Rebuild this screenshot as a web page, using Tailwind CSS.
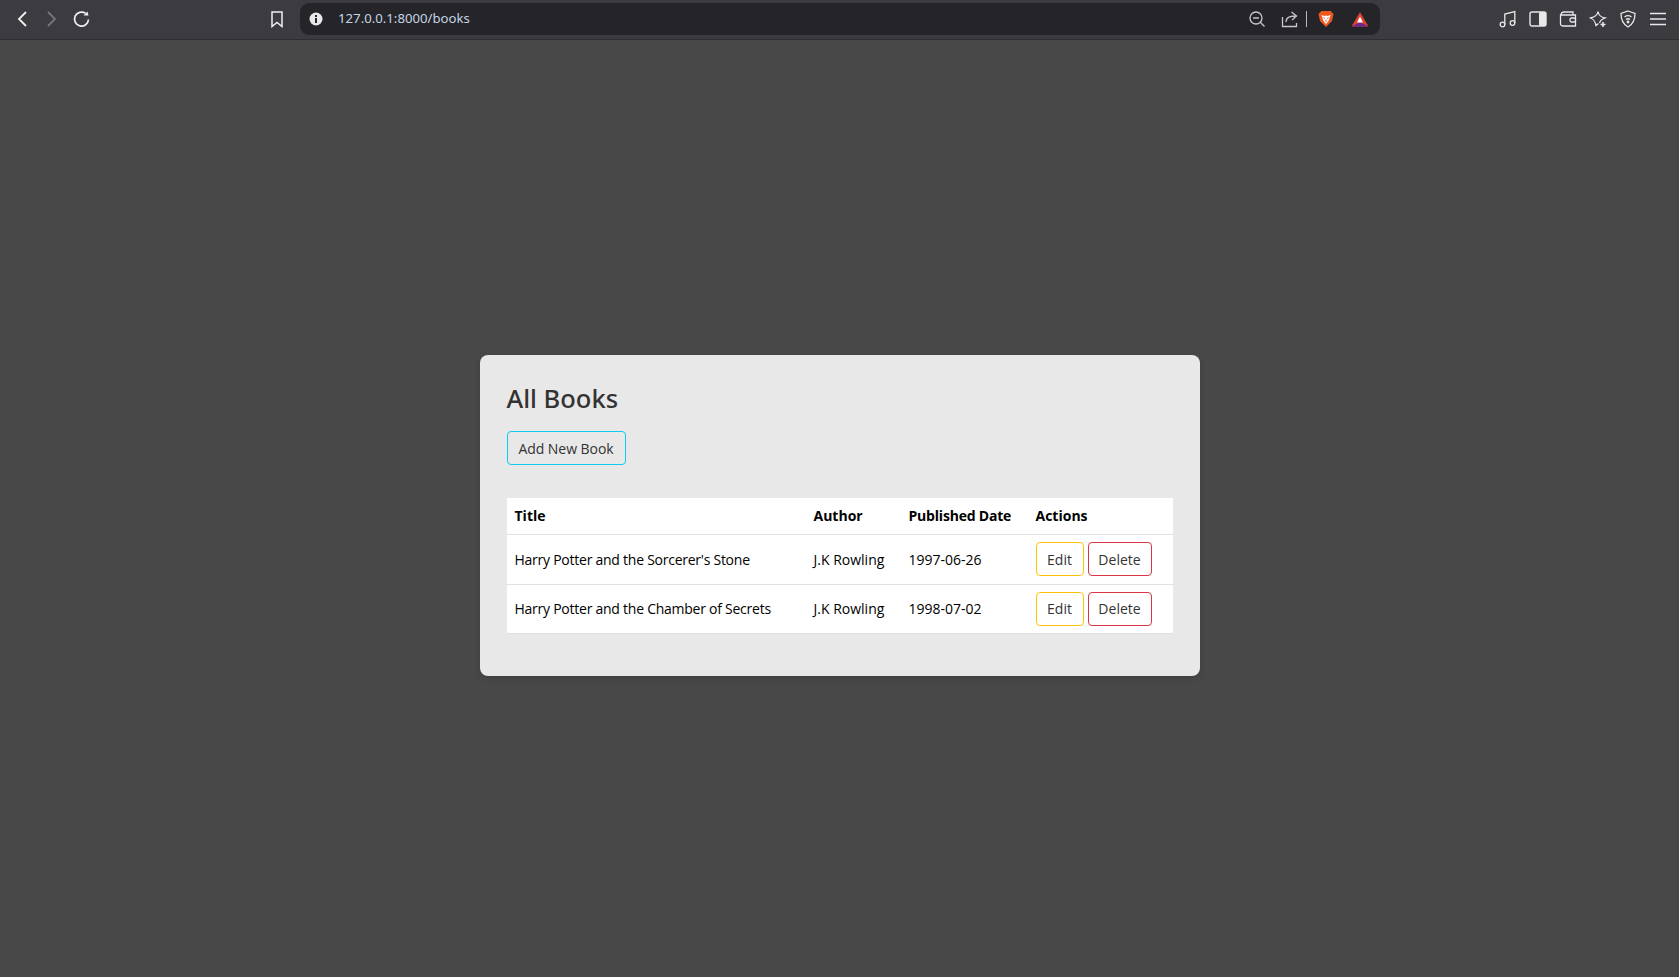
<!DOCTYPE html>
<html lang="en">
<head>
    <meta charset="UTF-8">
    <title>Books</title>
    <script src="https://cdn.jsdelivr.net/npm/@tailwindcss/browser@4"></script>
</head>
<body class="bg-[#484848] h-[977px] overflow-hidden flex flex-col font-['Open_Sans','Noto_Sans',sans-serif]">

    <!-- Browser toolbar -->
    <div class="h-[40px] shrink-0 bg-[#3b3b40] border-b border-[#2e2e31] pb-[1px] flex items-center text-[#e8e8ea]">
        <div class="w-[300px] shrink-0 flex items-center h-full">
            <svg class="ml-[14px] w-[16px] h-[20px]" viewBox="0 0 16 20" fill="none" stroke="#f0f0f2" stroke-width="1.8"><path d="M12 3 L5 10 L12 17"/></svg>
            <svg class="ml-[14px] w-[16px] h-[20px]" viewBox="0 0 16 20" fill="none" stroke="#77777a" stroke-width="1.8"><path d="M4 3 L11 10 L4 17"/></svg>
            <svg class="ml-[12px] w-[20px] h-[20px]" viewBox="0 0 20 20" fill="none" stroke="#f0f0f2" stroke-width="1.7"><path d="M16.5 10.5 A7 7 0 1 1 13.5 4.3"/><path d="M11.5 6.5 L16.5 6.5 L15.5 2.5 Z" fill="#f0f0f2" stroke="none"/></svg>
            <svg class="ml-[178px] w-[14px] h-[18px]" viewBox="0 0 14 18" fill="none" stroke="#f0f0f2" stroke-width="1.5"><path d="M2 2 H12 V16.5 L7 12.5 L2 16.5 Z"/></svg>
        </div>
        <div class="w-[1080px] h-[32px] bg-[#242429] rounded-[9px] flex items-center shrink-0">
            <svg class="ml-[9px] w-[14px] h-[14px]" viewBox="0 0 14 14"><circle cx="7" cy="7" r="6.5" fill="#e8e8ea"/><rect x="6" y="6" width="2" height="5" fill="#242429"/><rect x="6" y="3" width="2" height="2" fill="#242429"/></svg>
            <span class="ml-[15px] text-[13.2px] text-[#c4d4e4] font-['Noto_Sans',sans-serif]">127.0.0.1:8000/books</span>
            <div class="ml-auto flex items-center">
                <svg class="w-[18px] h-[18px]" viewBox="0 0 18 18" fill="none" stroke="#c8c8cc" stroke-width="1.3"><circle cx="8" cy="8" r="6"/><path d="M5 8 H11 M12.5 12.5 L16.5 16.5"/></svg>
                <svg class="ml-[15px] w-[18px] h-[18px]" viewBox="0 0 18 18" fill="none" stroke="#c8c8cc" stroke-width="1.3"><path d="M1.5 7 V16.5 H15.5 V13 M5 12 C5 8 8 6 14 6 M10.5 2 L15.5 6 L11 10"/></svg>
                <div class="ml-[7px] w-px h-[16px] bg-[#b8b8bc]"></div>
                <svg class="ml-[11px] w-[16px] h-[18px]" viewBox="0 0 16 18"><path d="M3.5 1 H12.5 L15.5 4 L14 11 L8 17 L2 11 L0.5 4 Z" fill="#f0581f"/><path d="M3.5 5 L6.5 6 L8 5.5 L9.5 6 L12.5 5 L11.5 8 L10.5 11 L8 14 L5.5 11 L4.5 8 Z" fill="#fff"/><path d="M5.5 7.5 L7 8.5 M10.5 7.5 L9 8.5 M8 9.5 V12" stroke="#f0581f" stroke-width="1" fill="none"/></svg>
                <svg class="ml-[17px] mr-[11px] w-[18px] h-[16px]" viewBox="0 0 18 16"><path d="M9 1 L17.5 15.5 H0.5 Z" fill="#e0412f"/><path d="M0.5 15.5 L9 11 L17.5 15.5 Z" fill="#6a2a8c"/><path d="M9 5.5 L12 11.5 H6 Z" fill="#fff"/></svg>
            </div>
        </div>
        <div class="flex-1 flex items-center justify-end gap-[12px] pr-[12px]">
            <svg class="w-[18px] h-[18px]" viewBox="0 0 18 18" fill="none" stroke="#e8e8ea" stroke-width="1.3"><circle cx="3.5" cy="14.5" r="2.3"/><circle cx="13.5" cy="13" r="2.3"/><path d="M5.8 14.5 V4 L15.8 1.5 V13"/></svg>
            <svg class="w-[18px] h-[18px]" viewBox="0 0 18 18"><rect x="1" y="2" width="16" height="14" rx="2" fill="none" stroke="#e8e8ea" stroke-width="1.4"/><rect x="10" y="2" width="7" height="14" rx="1.5" fill="#e8e8ea"/></svg>
            <svg class="w-[18px] h-[18px]" viewBox="0 0 18 18" fill="none" stroke="#e8e8ea" stroke-width="1.3"><path d="M2 5 C2 3 3 2 5 2 H14 V5 M1.5 5 H16.5 V16 H3.5 C2.5 16 1.5 15 1.5 14 Z"/><rect x="11" y="8" width="5.5" height="4" rx="1.5"/></svg>
            <svg class="w-[18px] h-[18px]" viewBox="0 0 18 18" fill="none" stroke="#e8e8ea" stroke-width="1.3"><path d="M9 1.5 C9.5 5 11 7 16 8 C12 9.5 11 11 10.5 13 M9 1.5 C8.5 5 6 7 1.5 8 C5 9.5 6 11 7 15.5 L9.5 13.5"/><path d="M14 12 V17 M11.5 14.5 H16.5" stroke-width="1.6"/></svg>
            <svg class="w-[18px] h-[18px]" viewBox="0 0 16 18" fill="none" stroke="#e8e8ea" stroke-width="1.3"><path d="M8 1 L15 3.5 C15 10 13.5 14 8 17 C2.5 14 1 10 1 3.5 Z"/><path d="M4.5 7 C6.5 5.5 9.5 5.5 11.5 7 M6 9.5 C7.2 8.6 8.8 8.6 10 9.5"/><circle cx="8" cy="12" r="0.8" fill="#e8e8ea"/></svg>
            <svg class="w-[18px] h-[18px]" viewBox="0 0 18 18" stroke="#e8e8ea" stroke-width="1.5"><path d="M1 3.5 H17 M1 9 H17 M1 14.5 H17"/></svg>
        </div>
    </div>

    <!-- Page -->
    <main class="flex-1 flex items-start justify-center pt-[315px]">
        <div class="w-[720px] h-[321px] bg-[#e8e8e8] rounded-[8px] p-[27px] shadow-[0_2px_6px_rgba(0,0,0,0.15)]">
            <h1 class="text-[25.5px] leading-[30px] font-medium text-[#333333] mt-[1px] font-['Noto_Sans',sans-serif]">All Books</h1>
            <button class="mt-[18px] h-[34px] w-[119px] border border-[#0dcaf0] rounded-[4px] text-[14px] tracking-[-0.05px] text-[#333333] block">Add New Book</button>
            <table class="mt-[33px] w-[666px] bg-white text-[14px] text-black border-collapse table-fixed">
                <thead>
                    <tr class="h-[36px] border-b border-[#dee2e6] text-left">
                        <th class="w-[299px] pl-[8px] font-bold">Title</th>
                        <th class="w-[95px] pl-[8px] font-bold">Author</th>
                        <th class="w-[128px] pl-[8px] font-bold tracking-[-0.2px]">Published Date</th>
                        <th class="pl-[7px] font-bold">Actions</th>
                    </tr>
                </thead>
                <tbody>
                    <tr class="h-[50px] border-b border-[#dee2e6]">
                        <td class="pl-[8px] tracking-[-0.25px]">Harry Potter and the Sorcerer's Stone</td>
                        <td class="pl-[8px]">J.K Rowling</td>
                        <td class="pl-[8px]">1997-06-26</td>
                        <td class="pl-[7px]">
                            <div class="flex gap-[4px] text-[#333333]">
                                <button class="w-[48px] h-[34px] border border-[#ffc107] rounded-[4px]">Edit</button>
                                <button class="w-[64px] h-[34px] border border-[#dc3545] rounded-[4px]">Delete</button>
                            </div>
                        </td>
                    </tr>
                    <tr class="h-[49px] border-b border-[#dee2e6]">
                        <td class="pl-[8px] tracking-[-0.25px]">Harry Potter and the Chamber of Secrets</td>
                        <td class="pl-[8px]">J.K Rowling</td>
                        <td class="pl-[8px]">1998-07-02</td>
                        <td class="pl-[7px]">
                            <div class="flex gap-[4px] text-[#333333]">
                                <button class="w-[48px] h-[34px] border border-[#ffc107] rounded-[4px]">Edit</button>
                                <button class="w-[64px] h-[34px] border border-[#dc3545] rounded-[4px]">Delete</button>
                            </div>
                        </td>
                    </tr>
                </tbody>
            </table>
        </div>
    </main>

</body>
</html>
